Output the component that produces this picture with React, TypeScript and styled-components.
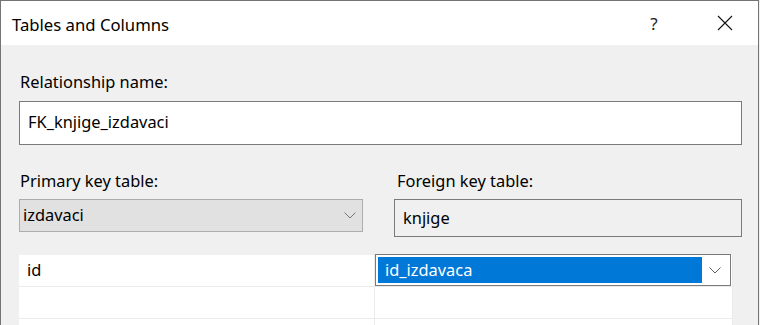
import React from "react";
import styled, { createGlobalStyle } from "styled-components";

const Global = createGlobalStyle`
  html, body { margin: 0; padding: 0; background: #f0f0f0; }
  body { font-family: "Noto Sans", "Open Sans", sans-serif; }
`;

const Window = styled.div`
  width: 757px;
  height: 324px;
  border: 1px solid #747474;
  border-bottom: none;
  background: #f0f0f0;
  overflow: hidden;
  display: flex;
  flex-direction: column;
`;

const TitleBar = styled.div`
  height: 44px;
  flex: none;
  background: #ffffff;
  display: flex;
  align-items: center;
  padding: 0 12px 0 11px;
  font-size: 16.7px;
  color: #000;
`;

const Title = styled.div`
  flex: 1;
  padding-top: 3px;
`;

const TitleButton = styled.div<{ $w: number; $gap?: number }>`
  width: ${(p) => p.$w}px;
  margin-right: ${(p) => p.$gap ?? 0}px;
  height: 44px;
  display: flex;
  align-items: center;
  justify-content: center;
  font-size: 17px;
  color: #222;
`;

const Body = styled.div`
  padding: 26px 16px 0 18px;
  display: flex;
  flex-direction: column;
`;

const Label = styled.div`
  font-size: 16.4px;
  color: #000;
  line-height: 22px;
  padding-left: 1px;
`;

const TextInput = styled.div`
  margin-top: 8px;
  height: 44px;
  border: 1px solid #7a7a7a;
  background: #fff;
  display: flex;
  align-items: center;
  padding-left: 8px;
  font-size: 16.4px;
  padding-bottom: 4px;
  box-sizing: border-box;
`;

const Columns = styled.div`
  margin-top: 25px;
  display: grid;
  grid-template-columns: 344px 348px;
  column-gap: 31px;
`;

const Field = styled.div`
  display: flex;
  flex-direction: column;
`;

const FieldLabel = styled(Label)<{ $indent?: number }>`
  padding-left: ${(p) => p.$indent ?? 1}px;
`;

const Combo = styled.div`
  margin-top: 7px;
  height: 33px;
  box-sizing: border-box;
  border: 1px solid #adadad;
  background: #e1e1e1;
  display: flex;
  align-items: center;
  padding: 0 6px 0 3px;
  font-size: 16.4px;
`;

const ReadOnlyBox = styled.div`
  margin-top: 7px;
  height: 38px;
  box-sizing: border-box;
  border: 1px solid #7a7a7a;
  background: #f0f0f0;
  display: flex;
  align-items: center;
  padding: 0 0 2px 8px;
  font-size: 16.4px;
`;

const ComboText = styled.div`
  flex: 1;
  padding-bottom: 2px;
`;

const Grid = styled.div`
  margin-top: 18px;
  width: 713px;
  background: #fff;
  border-right: 1px solid #ebebeb;
  display: flex;
  flex-direction: column;
`;

const Row = styled.div`
  display: grid;
  grid-template-columns: 356px 1fr;
  height: 31px;
  border-bottom: 1px solid #ebebeb;
`;

const Cell = styled.div<{ $divider?: boolean }>`
  display: flex;
  align-items: center;
  padding-left: 8px;
  font-size: 16.4px;
  border-right: ${(p) => (p.$divider ? "1px solid #ebebeb" : "none")};
  padding-bottom: 2px;
`;

const EditCell = styled.div`
  margin-top: -1px;
  height: 32px;
  box-sizing: border-box;
  border: 1px solid #7a7a7a;
  background: #fff;
  display: flex;
  align-items: center;
  padding: 2px;
  margin-right: 1px;
`;

const Selected = styled.div`
  flex: 1;
  align-self: stretch;
  background: #0078d7;
  color: #fff;
  display: flex;
  align-items: center;
  padding: 0 0 2px 7px;
  font-size: 16.4px;
`;

const ChevronBox = styled.div`
  width: 26px;
  display: flex;
  align-items: center;
  justify-content: center;
`;

const Chevron = ({ color = "#606060" }: { color?: string }) => (
  <svg width="12" height="7" viewBox="0 0 12 7">
    <path d="M0.5 0.5 L6 6 L11.5 0.5" fill="none" stroke={color} strokeWidth="1" />
  </svg>
);

export default function App() {
  return (
    <>
      <Global />
      <Window>
        <TitleBar>
          <Title>Tables and Columns</Title>
          <TitleButton $w={46} $gap={27}>?</TitleButton>
          <TitleButton $w={42}>
            <svg width="16" height="16" viewBox="0 0 16 16">
              <path d="M1 1 L15 15 M15 1 L1 15" stroke="#111" strokeWidth="1.1" />
            </svg>
          </TitleButton>
        </TitleBar>
        <Body>
          <Label>Relationship name:</Label>
          <TextInput>FK_knjige_izdavaci</TextInput>
          <Columns>
            <Field>
              <FieldLabel>Primary key table:</FieldLabel>
              <Combo>
                <ComboText>izdavaci</ComboText>
                <Chevron color="#777" />
              </Combo>
            </Field>
            <Field>
              <FieldLabel $indent={3}>Foreign key table:</FieldLabel>
              <ReadOnlyBox>knjige</ReadOnlyBox>
            </Field>
          </Columns>
          <Grid>
            <Row>
              <Cell $divider>id</Cell>
              <EditCell>
                <Selected>id_izdavaca</Selected>
                <ChevronBox>
                  <Chevron />
                </ChevronBox>
              </EditCell>
            </Row>
            <Row>
              <Cell $divider />
              <Cell />
            </Row>
            <Row>
              <Cell $divider />
              <Cell />
            </Row>
          </Grid>
        </Body>
      </Window>
    </>
  );
}
